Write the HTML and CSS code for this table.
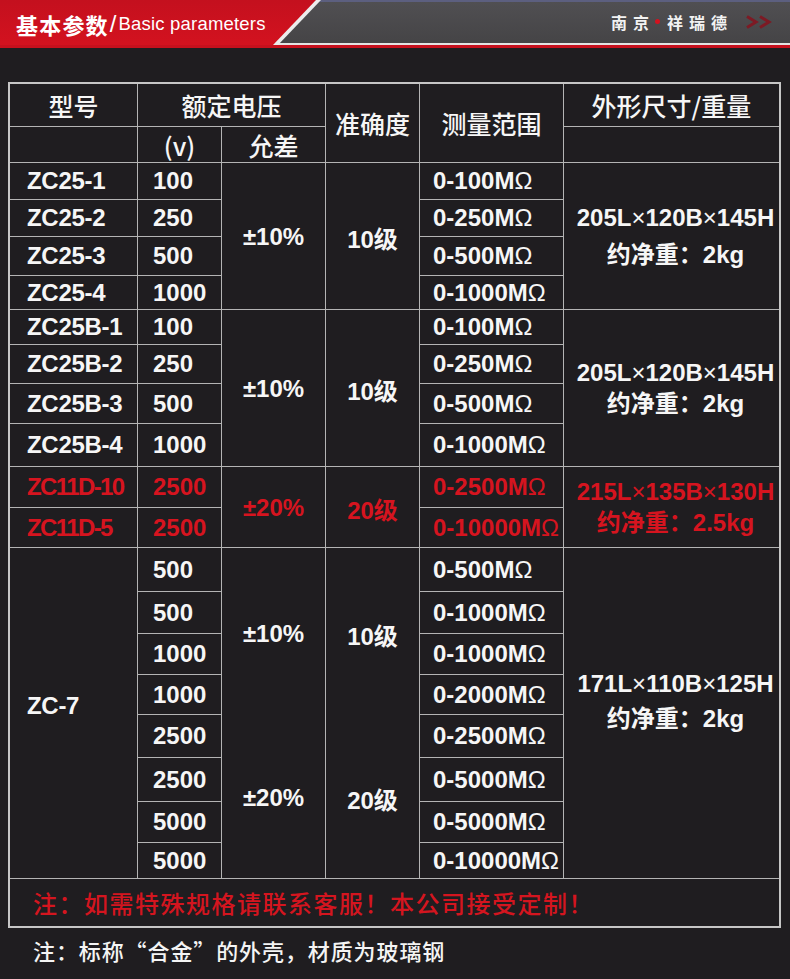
FILE: index.html
```html
<!DOCTYPE html>
<html lang="zh">
<head>
<meta charset="utf-8">
<title>基本参数</title>
<link rel="stylesheet" href="styles.css">
</head>
<body>
<header class="hdr">
  <div class="hdr-edge">
    <div class="hdr-title"><b>基本参数</b><span class="slash">/</span><span class="en">Basic parameters</span></div>
  </div>
  <div class="hdr-brand">
    <span>南</span><span>京</span><i class="dot"></i><span>祥</span><span>瑞</span><span>德</span>
    <svg class="arrows" width="28" height="14" viewBox="0 0 28 14"><path d="M2 1.5 L11 7 L2 12.5 M15 1.5 L24 7 L15 12.5" fill="none" stroke="#7d1a24" stroke-width="3"/></svg>
  </div>
</header>

<main class="tbl">
  <div class="cell c th">型号</div>
  <div class="cell c th c2">额定电压</div>
  <div class="cell c th r2">准确度</div>
  <div class="cell c th r2">测量范围</div>
  <div class="cell c th">外形尺寸/重量</div>
  <div class="cell"></div>
  <div class="cell c th">(v)</div>
  <div class="cell c th">允差</div>
  <div class="cell"></div>

  <div class="cell l m">ZC25-1</div>
  <div class="cell l v">100</div>
  <div class="cell c r4 d">±10%</div>
  <div class="cell c r4 d">10级</div>
  <div class="cell l g">0-100M<span class="om">Ω</span></div>
  <div class="cell c r4 dim"><div>205L<span class="x">×</span>120B<span class="x">×</span>145H</div><div>约净重：2kg</div></div>
  <div class="cell l m">ZC25-2</div>
  <div class="cell l v">250</div>
  <div class="cell l g">0-250M<span class="om">Ω</span></div>
  <div class="cell l m">ZC25-3</div>
  <div class="cell l v">500</div>
  <div class="cell l g">0-500M<span class="om">Ω</span></div>
  <div class="cell l m">ZC25-4</div>
  <div class="cell l v">1000</div>
  <div class="cell l g">0-1000M<span class="om">Ω</span></div>

  <div class="cell l m">ZC25B-1</div>
  <div class="cell l v">100</div>
  <div class="cell c r4 d">±10%</div>
  <div class="cell c r4 d">10级</div>
  <div class="cell l g">0-100M<span class="om">Ω</span></div>
  <div class="cell c r4 dim dim2"><div>205L<span class="x">×</span>120B<span class="x">×</span>145H</div><div>约净重：2kg</div></div>
  <div class="cell l m">ZC25B-2</div>
  <div class="cell l v">250</div>
  <div class="cell l g">0-250M<span class="om">Ω</span></div>
  <div class="cell l m">ZC25B-3</div>
  <div class="cell l v">500</div>
  <div class="cell l g">0-500M<span class="om">Ω</span></div>
  <div class="cell l m">ZC25B-4</div>
  <div class="cell l v">1000</div>
  <div class="cell l g">0-1000M<span class="om">Ω</span></div>

  <div class="cell l m red tight">ZC11D-10</div>
  <div class="cell l v red">2500</div>
  <div class="cell c r2 d red">±20%</div>
  <div class="cell c r2 d red">20级</div>
  <div class="cell l g red">0-2500M<span class="om">Ω</span></div>
  <div class="cell c r2 dim dim2 red"><div>215L<span class="x">×</span>135B<span class="x">×</span>130H</div><div>约净重：2.5kg</div></div>
  <div class="cell l m red tight">ZC11D-5</div>
  <div class="cell l v red">2500</div>
  <div class="cell l g red">0-10000M<span class="om">Ω</span></div>

  <div class="cell l m r8 zc7">ZC-7</div>
  <div class="cell l v">500</div>
  <div class="cell r8 split d"><span>±10%</span><span>±20%</span></div>
  <div class="cell r8 split d"><span>10级</span><span>20级</span></div>
  <div class="cell l g">0-500M<span class="om">Ω</span></div>
  <div class="cell c r8 dim dim7"><div>171L<span class="x">×</span>110B<span class="x">×</span>125H</div><div>约净重：2kg</div></div>
  <div class="cell l v">500</div>
  <div class="cell l g">0-1000M<span class="om">Ω</span></div>
  <div class="cell l v">1000</div>
  <div class="cell l g">0-1000M<span class="om">Ω</span></div>
  <div class="cell l v">1000</div>
  <div class="cell l g">0-2000M<span class="om">Ω</span></div>
  <div class="cell l v">2500</div>
  <div class="cell l g">0-2500M<span class="om">Ω</span></div>
  <div class="cell l v">2500</div>
  <div class="cell l g">0-5000M<span class="om">Ω</span></div>
  <div class="cell l v">5000</div>
  <div class="cell l g">0-5000M<span class="om">Ω</span></div>
  <div class="cell l v">5000</div>
  <div class="cell l g">0-10000M<span class="om">Ω</span></div>

  <div class="cell note full">注：如需特殊规格请联系客服！本公司接受定制！</div>
</main>

<p class="foot">注：标称“合金”的外壳，材质为玻璃钢</p>
</body>
</html>
```

FILE: styles.css
```css
html, body {
  margin: 0;
  padding: 0;
  background: #1f1d20;
  color: #f4f4f4;
  font-family: "Liberation Sans", "Noto Sans CJK SC", sans-serif;
}

body {
  width: 790px;
  height: 979px;
  overflow: hidden;
}

/* ---------- header ---------- */
.hdr {
  height: 48px;
  display: flex;
  justify-content: space-between;
  align-items: flex-start;
  background: linear-gradient(to bottom,
    #5c5f7f 0, #5c5f7f 2px,
    #504f52 2px, #454446 43px,
    #e4e4e4 43px, #e4e4e4 45px,
    #c6101d 45px, #c6101d 48px);
}

.hdr-edge {
  width: 322px;
  height: 45px;
  background: #ececec;
  clip-path: polygon(0 0, 321px 0, 278px 100%, 0 100%);
}

.hdr-title {
  height: 45px;
  background: linear-gradient(to bottom, #c4101e, #d3121f);
  clip-path: polygon(0 0, 316px 0, 273px 100%, 0 100%);
  display: flex;
  align-items: center;
  padding-left: 16px;
  padding-top: 3px;
  box-sizing: border-box;
  color: #fff;
}

.hdr-title b {
  font-family: "Noto Sans CJK SC", sans-serif;
  font-weight: 700;
  font-size: 22px;
  letter-spacing: 1.2px;
}

.hdr-title .slash {
  font-size: 24px;
  font-weight: 400;
  margin: 0 2px 0 1px;
}

.hdr-title .en {
  font-size: 18.5px;
  font-weight: 400;
  letter-spacing: 0.2px;
}

.hdr-brand {
  height: 43px;
  display: flex;
  align-items: center;
  padding-right: 17px;
  font-family: "Noto Sans CJK SC", sans-serif;
  font-size: 16px;
  font-weight: 700;
  color: #f2f2f2;
}

.hdr-brand span {
  margin-right: 6px;
}

.hdr-brand .dot {
  width: 5px;
  height: 5px;
  border-radius: 50%;
  background: #d3121f;
  margin: 0 7px 0 0;
}

.hdr-brand .arrows {
  margin-left: 12px;
}

/* ---------- table ---------- */
.tbl {
  margin: 34px 0 0 8px;
  width: max-content;
  display: grid;
  grid-template-columns: 127px 83px 103px 93px 143px 215px;
  grid-template-rows: 42px 35px 36px 36px 38px 33px 34px 38px 39px 42px 40px 39px 43px 41px 40px 39px 42px 43px 40px 35px 47px;
  gap: 1px;
  background: #b4b4b4;
  border: 2px solid #c6c6c6;
}

.cell {
  background: #1f1d20;
  display: flex;
  align-items: center;
  font-weight: 700;
  font-size: 24px;
  color: #f6f6f6;
  white-space: nowrap;
}

.c { justify-content: center; text-align: center; }
.l { justify-content: flex-start; }

.c2 { grid-column: span 2; }
.r2 { grid-row: span 2; }
.r4 { grid-row: span 4; }
.r8 { grid-row: span 8; }
.full { grid-column: 1 / -1; }

.th {
  font-family: "Noto Sans CJK SC", sans-serif;
  font-weight: 500;
  font-size: 25px;
}

.m { padding-left: 17px; letter-spacing: -0.3px; }
.m.tight { letter-spacing: -1.6px; }
.m.zc7 { padding-bottom: 14px; }
.v { padding-left: 15px; }
.g { padding-left: 13px; }

.om, .x {
  font-weight: 400;
}

.d {
  padding-top: 2px;
}

.red {
  color: #d6141f;
}

.dim {
  flex-direction: column;
  justify-content: center;
  line-height: 37px;
  padding-left: 8px;
}

.dim2 {
  line-height: 31px;
}

.dim7 {
  line-height: 35px;
  padding-bottom: 24px;
}

.split {
  display: grid;
  grid-template-rows: 1fr 1fr;
  justify-items: center;
  align-items: center;
}

.split span {
  padding-top: 4px;
}

.note {
  font-family: "Noto Sans CJK SC", sans-serif;
  font-weight: 500;
  font-size: 24px;
  color: #d4151f;
  padding-left: 23px;
  letter-spacing: 1.5px;
}

.foot {
  margin: 6px 0 0 33px;
  font-family: "Noto Sans CJK SC", sans-serif;
  font-weight: 500;
  font-size: 22px;
  line-height: 32px;
  color: #f4f4f4;
  letter-spacing: 0.9px;
}
```
